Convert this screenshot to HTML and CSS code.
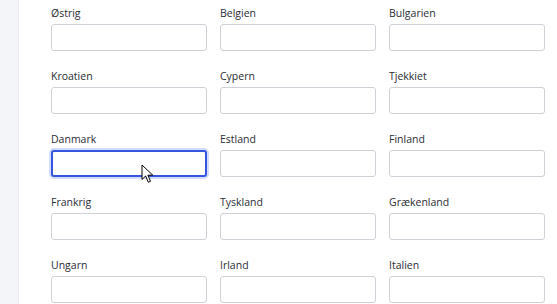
FILE: index.html
```html
<!DOCTYPE html>
<html lang="da">
<head>
    <meta charset="UTF-8">
    <title>Lande</title>
    <link rel="stylesheet" href="styles.css">
</head>
<body>
    <div class="sidebar"></div>
    <div class="content">
        <div class="country-grid">
            <div class="field"><label>Østrig</label><input type="text"></div>
            <div class="field"><label>Belgien</label><input type="text"></div>
            <div class="field"><label>Bulgarien</label><input type="text"></div>
            <div class="field"><label>Kroatien</label><input type="text"></div>
            <div class="field"><label>Cypern</label><input type="text"></div>
            <div class="field"><label>Tjekkiet</label><input type="text"></div>
            <div class="field focus-field"><label>Danmark</label><input type="text" class="focused">
                <svg class="pointer" width="13" height="20" viewBox="0 0 13 20">
                    <path d="M1 1 L1 15.5 L4.6 12 L7.3 18.2 L9.5 17.3 L6.9 11.2 L11.8 11.2 Z" fill="#fff" stroke="#000" stroke-width="1"/>
                </svg>
            </div>
            <div class="field"><label>Estland</label><input type="text"></div>
            <div class="field"><label>Finland</label><input type="text"></div>
            <div class="field"><label>Frankrig</label><input type="text"></div>
            <div class="field"><label>Tyskland</label><input type="text"></div>
            <div class="field"><label>Grækenland</label><input type="text"></div>
            <div class="field"><label>Ungarn</label><input type="text"></div>
            <div class="field"><label>Irland</label><input type="text"></div>
            <div class="field"><label>Italien</label><input type="text"></div>
        </div>
    </div>
</body>
</html>
```

FILE: styles.css
```css
body {
    margin: 0;
    font-family: "Open Sans", "Noto Sans", sans-serif;
    background: #ffffff;
    display: flex;
    height: 304px;
    overflow: hidden;
}

.sidebar {
    width: 18px;
    flex: none;
    background: #f4f5f9;
    border-right: 1px solid #eceef3;
}

.content {
    padding: 5px 0 0 32px;
}

.country-grid {
    display: grid;
    grid-template-columns: repeat(3, 156px);
    column-gap: 13px;
    row-gap: 17px;
}

.field {
    display: flex;
    flex-direction: column;
    position: relative;
}

.field label {
    font-size: 10.5px;
    line-height: 16px;
    color: #2a2d34;
    margin-bottom: 3px;
}

.field input {
    box-sizing: border-box;
    height: 27px;
    width: 156px;
    margin: 0;
    border: 1px solid #cfd1d7;
    border-radius: 3px;
    background: #fff;
    outline: none;
}

.field input.focused {
    border: 2px solid #3555e0;
    box-shadow: 0 0 0 2px #d4dcfb;
}

.pointer {
    position: absolute;
    left: 90px;
    top: 33px;
}
```
